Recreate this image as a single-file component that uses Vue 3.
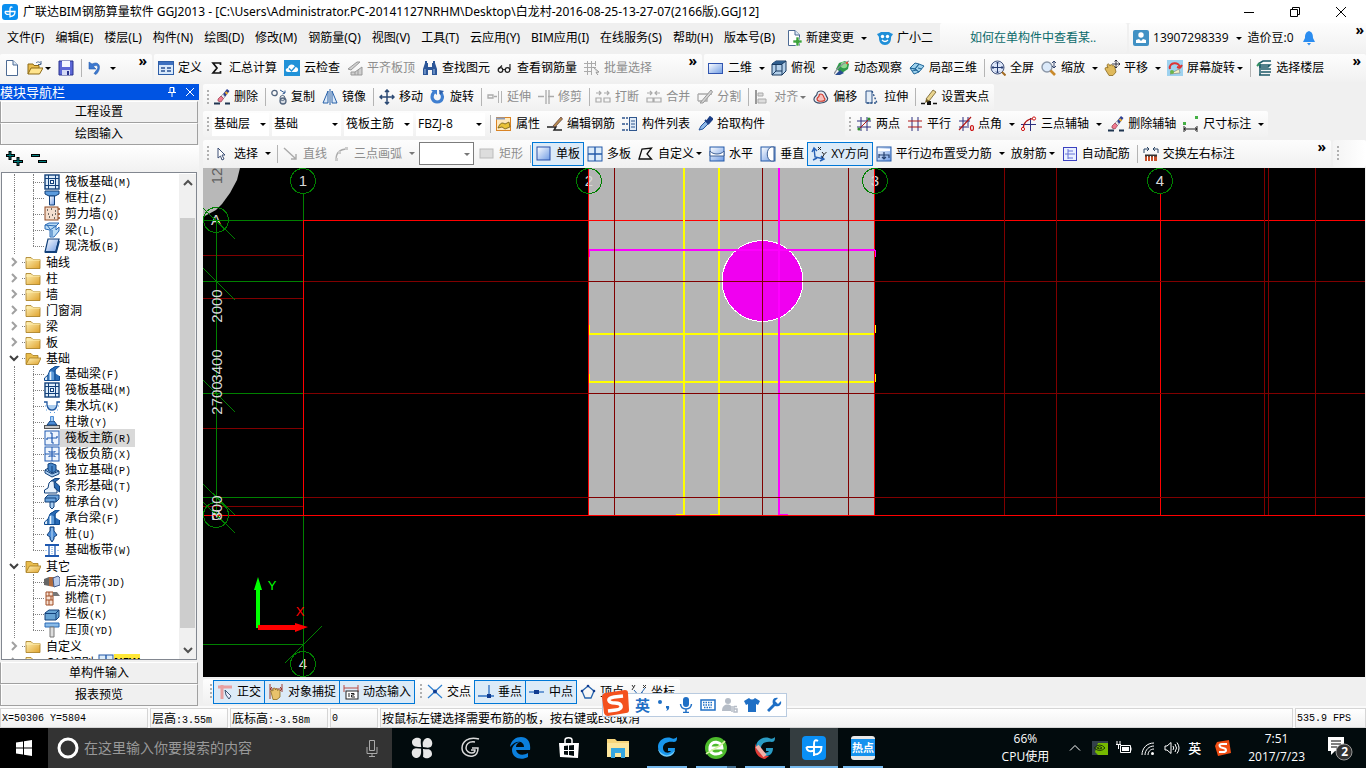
<script setup>
import { ref } from 'vue'

const page = '<path d="M2.500.5H9L13.500 5V15.500H2.500Z" fill="#fff" stroke="#4d6b94"/><path d="M9 .5V5H13.500" fill="#dce8f6" stroke="#4d6b94"/>'
const eraser = '<path d="M0 14.500H6M11 14.500H16" stroke="#1f3550" stroke-width="2"/><path d="M9 5 13 0 15.500 2 11 8Z" fill="#2b3f94"/><path d="M11.500 3 13.500 5" stroke="#f0b030" stroke-width="2"/><path d="M7 7 9 5 11 8 9 10Z" fill="#e5e5ef" stroke="#777" stroke-width=".5"/><path d="M7 7 9.500 9.500 7 13 4 12 4 10Z" fill="#f07a90" stroke="#93384c" stroke-width=".7"/>'
const pen = (a, b) => `<path d="M5 10 12 1 15 3 8 12Z" fill="${a}" stroke="${b}" stroke-width=".8"/><path d="M5 10 4 14 8 12Z" fill="${b}"/>`
const hash = '<path d="M1 5H15M1 11H15M5 1V15M11 1V15" stroke="#2c2f7e" fill="none"/>'
const folder = '<path d="M1 3.500H6L8 5.500H15V14.500H1Z" fill="url(#gold)" stroke="#a47a1c" stroke-width=".8"/><path d="M1 6H15" stroke="#fff1b4"/>'
const sq = '<rect x="1" y="1" width="14" height="14" fill="url(#sky)" stroke="#2259a8"/>'
const hand = '<path d="M3 8C2 6 4 6 5 7V5C6 3 7 4 7.500 6 8 4 9.500 4.500 9.500 6.500 11 5 12 6 12 8L12 13 9 15.500H5Z" fill="#e8c26b" stroke="#8a6a20" stroke-width=".8"/>'
const beam = '<path d="M0.500 14.500V12L4 9V14.500Z" fill="#d7e8f8" stroke="#0d4a91"/><path d="M4 9 6 4 11 1V14.500H4Z" fill="#5d9ad8" stroke="#0d4a91"/><path d="M6 4 12 0H15.500L11 4V14.500H15.500V10" fill="#2a6bb5" stroke="#0d4a91"/><path d="M6.500 6V14" stroke="#e8f3fd" stroke-width="1.500"/>'
const swirl = (a, b) => `<path d="M16 2C9 0 3 5 3 11C3 17 8 20 13 20C18 20 20 16 20 12H13V15H16C14 18 8 17 8 12C8 7 13 5 19 6C22 6 22 3 22 1C20 3 18 3 16 2Z" fill="${a}"/>${b || ''}`

const icons = {
  app: '<rect width="16" height="16" rx="3" fill="#0a8ff0"/><path d="M10.500 3.500C9 2.500 8 3 8 5V13.500M3 7.500H13C13 11 11 12.500 8 12.500M3 7.500C3 10 5 11 8 10" fill="none" stroke="#fff" stroke-width="1.300"/>',
  page, eraser, folder,
  openFile: '<path d="M1 14V4H6L7 5.500H12V8" fill="#e9bd4e" stroke="#8d6a16"/><path d="M1 14 4 8H16L12.500 14Z" fill="#ffe48d" stroke="#8d6a16"/><path d="M9 3C11 1 13 2 14 4M14 1V4.500H11" fill="none" stroke="#4d6b94"/>',
  openFolder: '<path d="M1 14V3.500H6L8 5.500H13V8" fill="#e9bd4e" stroke="#a47a1c" stroke-width=".8"/><path d="M1 14.500 4.500 8H16L13 14.500Z" fill="url(#gold)" stroke="#a47a1c" stroke-width=".8"/>',
  save: '<path d="M1 1H15V15H1Z" fill="#5c67d6" stroke="#2a348e"/><rect x="4" y="1" width="8" height="6" fill="#f4f6ff"/><rect x="4" y="10" width="8" height="5" fill="#d5daf5"/><rect x="9" y="11" width="2" height="4" fill="#2a348e"/>',
  undo: '<path d="M2 2V9H9L6.500 6.500C10 4 12 7 10 9.500L7 13.500 9 14.500C15 9 13 0 5 4Z" fill="#3c78cf" stroke="#285fae" stroke-width=".6"/>',
  define: '<rect x=".5" y="1.500" width="15" height="13" fill="#d8e8fa" stroke="#2d5ea8"/><rect x="1" y="2" width="14" height="3" fill="#3d70c0"/><path d="M3 8H7M3 11H7M9 8H13M9 11H13" stroke="#274f93" stroke-width="1.500"/>',
  sigma: '<path d="M11.500 5V3H4L8 8 4 13H11.500V11" fill="none" stroke="#111" stroke-width="1.700"/>',
  cloud: '<rect width="16" height="16" fill="#2192d8"/><path d="M4 12C1 12 1 8 4 8C4 4 10 3 11 7C15 7 15 12 12 12Z" fill="#fff"/><path d="M5 8.500 7.500 11 11 7" fill="none" stroke="#2192d8" stroke-width="1.400"/>',
  flush: '<path d="M1 9 10 2 13 2 4 10ZM4 12V15H15V7L8 12Z" fill="#d0d0d0" stroke="#999"/><path d="M8 12V15M11 10V15" stroke="#999"/>',
  find: '<path d="M3 3H6V7H10V3H13L15 9V15H10V10H6V15H1V9Z" fill="#2c5698"/><path d="M4 1V5M12 1V5" stroke="#2c5698" stroke-width="2"/><path d="M3 9V14M12 9V14" stroke="#9ec0ea"/>',
  glasses: '<circle cx="3.500" cy="10" r="2.300" fill="none" stroke="#222" stroke-width="1.300"/><circle cx="10.500" cy="10" r="2.300" fill="none" stroke="#222" stroke-width="1.300"/><path d="M6 9.500H8M1.500 9 5 5.500M13 10V4" stroke="#222" fill="none" stroke-width="1.200"/>',
  batch: '<path d="M0 3.500H12M0 7.500H12M0 11.500H8M3.500 1V15M7.500 1V15M11.500 1V6" stroke="#aaa" fill="none"/><path d="M9 7 15 12 12 12.500 14 15" fill="#ddd" stroke="#999"/>',
  plane: '<rect x=".5" y="3.500" width="14" height="10" fill="url(#sky)" stroke="#3155b0"/>',
  cube: '<path d="M1 4 5 1H15V11L11 15H1Z" fill="#b4d0ea" stroke="#17395f"/><path d="M1 4 5 1H15L11 4Z" fill="#2f5d8c"/><path d="M1 4.500H11V15M11 4 15 1M5 5V11M5 11 1 15M5 11H11" fill="none" stroke="#17395f"/>',
  orbit: '<path d="M5 11 2 9 5 3 11 1 15 4 14 9 8 13Z" fill="#2f9a4a"/><circle cx="10" cy="5" r="3.200" fill="#8ed98e"/><path d="M0 14C2 9 9 3 15 1" stroke="#8a8f99" stroke-width="1.300" fill="none"/><path d="M1 15 6 10 10 13 6 15Z" fill="#2a4d92"/><circle cx="13" cy="3" r="1.200" fill="#d53"/>',
  local3d: '<path d="M1 8 6 3 10 4 6 9ZM6 9 10 4 15 6 10 12ZM1 8 6 9 10 12 5 14Z" fill="#9ed1ec" stroke="#23689a"/><path d="M3 11 8 10M9 8 13 9" stroke="#23689a"/>',
  full: '<circle cx="7.500" cy="7.500" r="6.500" fill="#dde6f8" stroke="#43547c"/><path d="M7.500 2V13M2 7.500H13M6 3.500 7.500 2 9 3.500M6 11.500 7.500 13 9 11.500M3.500 6 2 7.500 3.500 9M11.500 6 13 7.500 11.500 9" fill="none" stroke="#273c70"/><path d="M12 12 15.500 15.500" stroke="#a36c23" stroke-width="2"/>',
  zoom: '<circle cx="6" cy="7" r="5" fill="#dceafa" stroke="#8b97a8" stroke-width="1.400"/><path d="M9.500 10.500 14 15" stroke="#c98a2b" stroke-width="2.600"/><path d="M13 1V8M11 3 13 1 15 3M11 6 13 8 15 6" stroke="#34466e" fill="none"/>',
  pan: '<path d="M1 9C1 7 3 7 4 8L3 5C4 3 5.500 4 6 6 6.500 4 8 4 8.500 6 10 5 11 6 11 8L12 12 9 15.500H5Z" fill="#dfb95c" stroke="#8a6a20" stroke-width=".8"/><path d="M12 0V8M8 4H16M10.500 1.500 12 0 13.500 1.500M10.500 6.500 12 8 13.500 6.500M14.500 2.500 16 4 14.500 5.500" stroke="#223" fill="none" stroke-width=".9"/>',
  rotateScr: '<rect width="16" height="16" fill="#9ed2ef"/><path d="M3 9C1 2 13 1 13 8M13 8 10 7M13 8 15 5" fill="none" stroke="#d33" stroke-width="2"/><path d="M3 14 12 9 13 13Z" fill="#f5f1c4" stroke="#777" stroke-width=".6"/><circle cx="5" cy="12" r="2" fill="#6bb54a"/>',
  floors: '<path d="M2 4 7 1H15M4 4V15M3 5H14L12 7H3M5 9H15M5 12H15M3 15H14" fill="none" stroke="#1c5a68" stroke-width="1.500"/><path d="M1 6 4 3" stroke="#329060" stroke-width="2"/>',
  copy: '<circle cx="3.500" cy="4" r="2.700" fill="none" stroke="#53657e" stroke-width="1.300"/><circle cx="12" cy="12" r="3" fill="#d8dde4" stroke="#53657e" stroke-width="1.300"/><circle cx="11.500" cy="9" r="2.500" fill="none" stroke="#53657e"/><path d="M9 1 14 4M14 4V1.500M14 4 11.500 5" stroke="#345c94"/>',
  mirror: '<path d="M6 2V14H1ZM10 2V14H15Z" fill="#dce9f8" stroke="#2760a8"/><path d="M8 0V16" stroke="#2760a8"/>',
  move: '<path d="M8 1V15M1 8H15M6 3 8 1 10 3M6 13 8 15 10 13M3 6 1 8 3 10M13 6 15 8 13 10" fill="none" stroke="#2c4a74" stroke-width="1.500"/>',
  rotate: '<path d="M4 3C0 8 3 13 7 13C13 13 14 6 10 3" fill="none" stroke="#3f7fd0" stroke-width="3.200"/><path d="M1 1H7V6Z" fill="#3f7fd0"/><path d="M9 1 14 2 10 6Z" fill="#2c5fa8"/>',
  extend: '<path d="M1 6H6V9H1ZM7 7.500H10" fill="none" stroke="#aaa" stroke-width="1.300"/><path d="M11.500 2V14M14.500 2V14" stroke="#b5b5b5"/>',
  trim: '<path d="M0 7.500H6M10 7.500H16M8 1V15M11 1V15" stroke="#aaa" fill="none" stroke-width="1.300"/>',
  brk: '<path d="M1 9H6V13H1ZM9 9H15V13H9ZM1 4H6M4 2 6 4 4 6M9 4H14M12 2 14 4 12 6" fill="none" stroke="#aaa" stroke-width="1.200"/>',
  merge: '<path d="M1 9H7V13H1ZM8 9H15V13H8ZM1 4H6M4 2 6 4 4 6M9 4H14M11 2 9 4 11 6" fill="none" stroke="#aaa" stroke-width="1.200"/>',
  split: '<path d="M1 5H15M1 12H10V7M1 12V5" fill="none" stroke="#aaa" stroke-width="1.300"/><path d="M3 14 14 1 15.500 3 6 14Z" fill="#d4d4d4" stroke="#999"/>',
  align: '<path d="M2 1V15" stroke="#999" stroke-width="2"/><path d="M4 4H9V7H4ZM4 10H12V14H4Z" fill="#ddd" stroke="#aaa"/>',
  offset: '<path d="M8 2C13 2 12 6 14.500 9C16 15 0 16 1 10C1 7 4 7 4 5C4 3 6 2 8 2Z" fill="#e8edf3" stroke="#3b4d68" stroke-width="1.200"/><path d="M8 5C11 5 10 8 12 10C12 13 4 13 4 10C4 8 6 8 6 7C6 5 7 5 8 5Z" fill="#f6c0bb" stroke="#d0392c" stroke-width="1.200"/>',
  stretch: '<path d="M2 14V2H8V14Z" fill="#e4edf7" stroke="#2e5589"/><path d="M8 2 13 14H2" stroke="#2e5589" stroke-width="1.400" stroke-dasharray="2 1.500" fill="none"/>',
  grip: '<path d="M0 14.500H4M12 14.500H16" stroke="#111" stroke-width="1.500"/><rect x="6" y="12" width="4" height="4" fill="#111"/>' + pen('#e9d48e', '#6e5a24'),
  props: '<rect x=".5" y="1.500" width="14" height="13" fill="#ffe9bd" stroke="#d98324"/><path d="M0 2.500H9" stroke="#8a9ab8" stroke-width="2"/><path d="M2 12C4 7 6 6 9 8L13 6 14 11 9 13 6 11Z" fill="#e8c238" stroke="#6d5612" stroke-width=".8"/>',
  editbar: '<path d="M0 11H9L7 14H15" fill="none" stroke="#222" stroke-width="1.400"/><path d="M6 10 14 1 15.500 3 8 11Z" fill="#b98d4f" stroke="#533" stroke-width=".7"/>',
  list: '<path d="M0 2H3M0 8H3M0 14H3M4 2H6M4 8H6M4 14H6" stroke="#2f568e" stroke-width="1.600"/><rect x="7.500" y="1.500" width="7" height="13" fill="#e1ebf7" stroke="#2f568e"/><path d="M9 5H13M9 8H13M9 11H13" stroke="#2f568e"/>',
  pick: '<path d="M2 14 4 10 9 5 12 7 6 13Z" fill="#8fb9e8" stroke="#27569c"/><path d="M8 4 12 8M10 5 13 1 15.500 3 12 7Z" fill="#1c3f86" stroke="#1c3f86" stroke-width="1.800"/>',
  twoPt: hash + '<path d="M2 14 14 2" stroke="#b01818"/><circle cx="3" cy="13" r="1.600" fill="#2e8b2e"/><circle cx="13" cy="3" r="1.600" fill="#2e8b2e"/>',
  para: '<path d="M5 1V15M11 1V15" stroke="#2c2f7e"/><path d="M1 5H15M1 11H15" stroke="#b01818" stroke-width="1.200"/>',
  angle: '<path d="M1 5H12M1 11H9M5 1V15M10 1V12" stroke="#2c2f7e"/><path d="M1 14 13 1" stroke="#b01818" stroke-width="1.200"/><ellipse cx="14" cy="12" rx="1.500" ry="2.500" fill="none" stroke="#c11" stroke-width="1.200"/>',
  threeAx: '<path d="M0 8.500H15M9.500 2V15" stroke="#2c2f7e"/><path d="M2 14C2 7 6 3 13 2.500" stroke="#b01818" fill="none" stroke-width="1.200"/><circle cx="2" cy="13" r="1.600" fill="#fff" stroke="#c11"/><circle cx="13" cy="2.500" r="1.600" fill="#fff" stroke="#c11"/>',
  dim: '<path d="M1 10V16M14 10V16M1 13H14M3 11.500 1 13 3 14.500M12 11.500 14 13 12 14.500" stroke="#222" fill="none"/><rect x="0" y="6" width="3" height="3" fill="#44b044"/><rect x="12" y="0" width="3" height="3" fill="#44b044"/>',
  cursor: '<path d="M4 2 11 9H8L10 13 8 14 6.500 10 4 12Z" fill="#fff" stroke="#3d4f74"/>',
  line: '<path d="M1 2 13 13M13 8V13H8" stroke="#aaa" fill="none" stroke-width="1.400"/>',
  arc: '<path d="M2 14C2 7 6 3 13 3" stroke="#aaa" fill="none" stroke-width="1.300"/><path d="M1 12H4V15H1ZM4 5H7V8H4ZM11 1H14V4H11Z" fill="#ccc"/>',
  rect: '<rect x="1" y="3" width="13" height="9" fill="#ddd" stroke="#bbb"/>',
  single: '<rect x="1" y="1" width="13" height="13" fill="url(#sky)" stroke="#2850a8"/>',
  multi: '<rect x="1" y="1" width="14" height="14" fill="#dcecfa" stroke="#2259a8"/><path d="M8 1V15M1 8H15" stroke="#2259a8" stroke-width="1.400"/>',
  custom: '<path d="M1 13 4 3 13.500 2 9 8 13.500 13Z" fill="none" stroke="#111" stroke-width="1.300"/>',
  horiz: sq + '<path d="M1 5C4 9 12 9 15 5V10H1Z" fill="#fff" stroke="#3c5f95"/>',
  vert: sq + '<path d="M11 1C6 3 6 13 11 15H14V1Z" fill="#fff" stroke="#3c5f95"/>',
  xy: '<path d="M3 2 4 11 13 13M1 6 3 2 6 5M10 10 13 13 9 15M6 12 2 14" stroke="#2560b5" fill="none" stroke-width="1.400"/><path d="M7 1 10 4M10 1 7 4M11 6 13 8.500 15.500 6M13 8.500 11 12" stroke="#222" fill="none"/>',
  forcebar: sq + '<path d="M2 4H14" stroke="#fff" stroke-width="2"/><path d="M3 8V12M3 9H13V12M8 6V13M6 11 8 13 10 11" fill="none" stroke="#25406f" stroke-width="1.200"/>',
  autobar: '<rect x="1.500" y="1.500" width="13" height="13" fill="#e9f0ff" stroke="#3b41c0"/><path d="M6 3V13M6 5H11M3 8H13M6 12H11" stroke="#6675d8" fill="none"/>',
  swap: '<path d="M1 7V3H6M4 1 6 3 4 5M15 7V3H10M12 1 10 3 12 5" fill="none" stroke="#2b4564"/><path d="M2 9H14V15H2Z" fill="#c7502a"/><path d="M2 9.500H14" stroke="#333" stroke-width="2"/><path d="M4.500 10V15M7.500 10V15M10.500 10V15" stroke="#fff"/>',
  ortho: '<path d="M1 3H15M5 1V15" stroke="#e8a0a0" stroke-width="3"/><path d="M8 6 14 12 12 15 9 11Z" fill="#eef" stroke="#3b5470"/>',
  osnap: '<path d="M2 0V15M14 0V8M2 5H14M4 3 2 5 4 7M12 3 14 5 12 7" fill="none" stroke="#9c3a30"/>' + hand,
  dyn: '<path d="M1 1V8M15 1V8M1 4H15" stroke="#b84a44"/><rect x="3" y="7" width="12" height="8" fill="#fff" stroke="#222"/><path d="M6 9V13M8 9.500H11V11H8.500V13H12" fill="none" stroke="#222"/>',
  cross: '<path d="M1 1 15 14M15 1 1 14" stroke="#2d7fd0" stroke-width="1.200"/><circle cx="8" cy="7.500" r="2" fill="#113c90"/>',
  perp: '<path d="M11 1V12M0 12H16" stroke="#2d6fc0" stroke-width="1.300"/><rect x="9" y="10" width="4" height="4" fill="#113c90"/>',
  mid: '<path d="M0 8H15" stroke="#2d6fc0" stroke-width="1.300"/><rect x="5" y="6" width="5" height="4" fill="#113c90"/>',
  vertex: '<path d="M8 2 14 7 11 14H5L2 7Z" fill="none" stroke="#2664ad" stroke-width="1.300"/><circle cx="8" cy="2" r="1.300" fill="#113c90"/><circle cx="14" cy="7" r="1.300" fill="#113c90"/><circle cx="2" cy="7" r="1.300" fill="#113c90"/>',
  coord: '<path d="M3 6 8 12 14 4M5 9V15M11 8V13" fill="none" stroke="#2664ad"/><path d="M1 1 3 4M4 1 1 6M12 1 15 4M15 1 12 4" stroke="#333"/>',
  newchg: page + '<path d="M10 7H13V10H16V13H13V16H10V13H7V10H10Z" fill="#3da33c" stroke="#fff" stroke-width=".6"/>',
  owl: '<path d="M0 4C2 3 3 3 4 2H12C13 3 14 3 16 4 15 6 14 6 14 8 14 12 12 15 8 15S2 12 2 8C2 6 1 6 0 4Z" fill="#1f8fd8"/><circle cx="5.500" cy="6.500" r="1.700" fill="#fff"/><circle cx="10.500" cy="6.500" r="1.700" fill="#fff"/><path d="M5 10Q8 13 11 10" stroke="#fff" fill="none" stroke-width="1.300"/>',
  user: '<rect width="16" height="16" rx="2" fill="#4191c4"/><circle cx="8" cy="5" r="2.700" fill="#fff"/><path d="M3 13V10L6 9 8 11 10 9 13 10V13Z" fill="#fff"/>',
  bell: '<path d="M8 1C11 2 12 4 12 8L14 12H2L4 8C4 4 5 2 8 1Z" fill="#2b8df0"/><path d="M6 13H10L8 15.500Z" fill="#2b8df0"/>',
  raft: '<rect x="1" y="1" width="14" height="14" fill="#dcecfa" stroke="#12407a" stroke-width="1.400"/><path d="M1 4.500H15M1 11.500H15M4.500 1V15M11.500 1V15" stroke="#12407a"/><rect x="6.500" y="6.500" width="3" height="3" fill="#fff" stroke="#12407a"/>',
  column: '<path d="M1 1H15V4L11 6H5L1 4Z" fill="#5b9bdd" stroke="#12407a"/><path d="M5.500 6H10.500V15H5.500Z" fill="url(#sky)" stroke="#12407a"/>',
  wall: '<rect x="1" y="1" width="13" height="13" fill="#f4dfcf" stroke="#8e4a24"/><path d="M3 4H4M7 3H8M11 5H12M4 8H5M8 9H9M5 11H6M10 12H11M11 8H12" stroke="#444" stroke-width="1.300"/><path d="M14 3H16M14 8H16M14 12H16" stroke="#8e4a24" stroke-width="1.400"/>',
  girder: '<path d="M1 3 5 1H15L12 4V8L15 5V9L10 15H6V8L1 7Z" fill="#bbdcf5" stroke="#2a6bb5"/><path d="M1 3 12 4M6 8 12 4M8 14V8M3 3 6 7" stroke="#2a6bb5"/>',
  slab: '<path d="M4 1H15L12 14H1Z" fill="url(#sky)" stroke="#12407a" stroke-width="1.200"/><path d="M1 14H12L15 3" fill="none" stroke="#12407a" stroke-width="2"/>',
  beam,
  pit: '<path d="M0 4H3V7Q4 12 8 12T13 7V4H16" fill="none" stroke="#2058a0" stroke-width="1.300"/><path d="M4 8H12M5 10H11M1 8H2M14 8H15M2 12H3M6 14.500H7M10 14.500H11M13 12H14" stroke="#5b9bdd"/>',
  pier: '<rect x=".5" y="11.500" width="15" height="3" fill="#c8c8c8" stroke="#555"/><path d="M3 11 6 7H10L13 11Z" fill="#4c8cd6" stroke="#12407a"/><path d="M6.500 7V2.500H9.500V7" fill="#a9cdf0" stroke="#4c8cd6"/>',
  rmain: '<rect x="1" y="1" width="14" height="14" fill="#edf4fd" stroke="#1e58b0"/><path d="M8 3V13M3 8H13M3 8V10M13 8V6M8 3H6M8 13H10" stroke="#1e58b0" fill="none" stroke-width="1.200"/>',
  rneg: '<rect x="1" y="1" width="14" height="14" fill="#edf4fd" stroke="#1e58b0"/><path d="M8 1V15M1 8H15" stroke="#1e58b0"/><path d="M5 5V6H11V5M5 11V10H11V11" stroke="#1e58b0" fill="none"/>',
  indep: '<path d="M1 8 6 5 15 9V12L8 15 1 11Z" fill="#a9cdf0" stroke="#12407a"/><path d="M4 2 7 1 12 3V9L8 11 4 8Z" fill="#4484c8" stroke="#12407a"/><path d="M1 8 8 12 15 9M8 4V11" stroke="#12407a" fill="none"/>',
  strip: '<path d="M7 3 11 .5H15.500L11 4 15.500 8V14L12 11Z" fill="#2a6bb5" stroke="#12407a"/><path d="M.5 15V12L4 10 5 5 7 3H10L10.500 10 13 12V15Z" fill="#e8f2fc" stroke="#12407a"/>',
  cap: '<path d="M1 4 4 1H15V5L12 8H1Z" fill="#6ba3dc" stroke="#12407a"/><path d="M1 4H12V8" fill="none" stroke="#12407a"/><path d="M6 8H10V13L8 15 6 13Z" fill="#a9cdf0" stroke="#12407a"/>',
  pile: '<path d="M6 5V1H10V5L13 9 10 11V13L8 16 6 13V11L3 9Z" fill="#4c8cd6" stroke="#12407a"/><path d="M8 2V14" stroke="#bcdcf8"/>',
  band: '<path d="M1 3H15M1 14H15" stroke="#1e58b0" stroke-width="2"/><path d="M5 3V14M11 3V14" stroke="#1e58b0" stroke-width="1.300"/><path d="M8 5V12M2 8V9M14 8V9" stroke="#5b9bdd" stroke-dasharray="1 1"/>',
  post: '<path d="M0 5 5 3V12L0 11Z" fill="#666"/><path d="M5 3H10V13L5 12Z" fill="#b06a3c"/><path d="M9 4 14 2 16 4V11L10 13Z" fill="#b9ccec" stroke="#40598a"/>',
  eave: '<path d="M2 2H9V15H2Z" fill="#f7e2d4" stroke="#a04c24"/><path d="M2 6H9M2 10H9M5 2V6M7 6V10M5 10V15" stroke="#a04c24"/><path d="M9 2H13L16 6H9Z" fill="#777"/>',
  rail: '<path d="M1 7 5 4H15V11L12 14H1Z" fill="#68a4d4" stroke="#12407a"/><path d="M1 7.500H12V14M12 7 15 4" stroke="#12407a" fill="none"/>',
  coping: '<path d="M1 1H15V5H1Z" fill="#8abbe8" stroke="#2a6bb5"/><path d="M6 5H10V15H6Z" fill="#ddd" stroke="#777"/>',
}

const I = (i, t, o = {}) => ({ k: 'item', i, t, ...o })
const S = { k: 'sep' }
const G = { k: 'grip' }
const off = { off: true }
const M = t => ({ k: 'item', t })

const rows = [
  { id: 'menu', groups: [
    { c: 'menus', items: ['文件(F)', '编辑(E)', '楼层(L)', '构件(N)', '绘图(D)', '修改(M)', '钢筋量(Q)', '视图(V)', '工具(T)', '云应用(Y)', 'BIM应用(I)', '在线服务(S)', '帮助(H)', '版本号(B)'].map(M).concat([I('newchg', '新建变更', { a: 1 }), I('owl', '广小二')]) },
    { c: 'tip', items: [{ k: 'link', t: '如何在单构件中查看某..' }] },
    { c: 'grow account', items: [I('user', '13907298339', { a: 1 }), M('造价豆:0'), I('bell', ''), { k: 'more' }] },
  ] },
  { id: 'main', groups: [
    { c: 'files', items: [I('page', ''), I('openFile', '', { a: 2 }), I('save', ''), S, I('undo', '', { a: 1 }), { k: 'more' }] },
    { c: 'calc', items: [I('define', '定义'), I('sigma', '汇总计算'), I('cloud', '云检查'), I('flush', '平齐板顶', off), I('find', '查找图元'), I('glasses', '查看钢筋量'), I('batch', '批量选择', off), { k: 'more' }] },
    { c: 'grow', items: [I('plane', '二维', { a: 1 }), I('cube', '俯视', { a: 1 }), I('orbit', '动态观察'), I('local3d', '局部三维'), S, I('full', '全屏'), I('zoom', '缩放', { a: 1 }), I('pan', '平移', { a: 1 }), I('rotateScr', '屏幕旋转', { a: 2 }), S, I('floors', '选择楼层'), { k: 'more' }] },
  ] },
  { id: 'edit', groups: [
    { items: [G, I('eraser', '删除'), S, I('copy', '复制'), I('mirror', '镜像'), S, I('move', '移动'), I('rotate', '旋转'), S, I('extend', '延伸', off), I('trim', '修剪', off), S, I('brk', '打断', off), I('merge', '合并', off), I('split', '分割', off), S, I('align', '对齐', { off: true, a: 2 }), I('offset', '偏移'), I('stretch', '拉伸'), S, I('grip', '设置夹点')] },
  ] },
  { id: 'comp', groups: [
    { items: [G, { k: 'combo', t: '基础层', n: '楼层', c: 'short' }, { k: 'combo', t: '基础', n: '分类' }, { k: 'combo', t: '筏板主筋', n: '构件类型' }, { k: 'combo', t: 'FBZJ-8', n: '构件' }, S, I('props', '属性'), I('editbar', '编辑钢筋'), I('list', '构件列表'), I('pick', '拾取构件')] },
    { c: 'axis', items: [G, I('twoPt', '两点'), I('para', '平行'), I('angle', '点角', { a: 1 }), I('threeAx', '三点辅轴', { a: 1 }), I('eraser', '删除辅轴'), I('dim', '尺寸标注', { a: 1 })] },
  ] },
  { id: 'draw', groups: [
    { c: 'grow', items: [G, I('cursor', '选择', { a: 1 }), S, I('line', '直线', off), I('arc', '三点画弧', { off: true, a: 1 }), { k: 'combo', t: '', n: '画弧参数', c: 'boxed' }, I('rect', '矩形', off), S, I('single', '单板', { on: true }), I('multi', '多板'), I('custom', '自定义', { a: 2 }), I('horiz', '水平'), I('vert', '垂直'), I('xy', 'XY方向', { on: true }), I('forcebar', '平行边布置受力筋', { a: 1 }), { k: 'item', t: '放射筋', a: 2 }, I('autobar', '自动配筋'), S, I('swap', '交换左右标注'), { k: 'more' }] },
    { c: 'stub', items: [G] },
  ] },
  { id: 'snap', groups: [
    { c: 'wide', items: [G, I('ortho', '正交', { on: true }), I('osnap', '对象捕捉', { on: true }), I('dyn', '动态输入', { on: true })] },
    { items: [G, I('cross', '交点'), I('perp', '垂点', { on: true }), I('mid', '中点', { on: true }), I('vertex', '顶点'), I('coord', '坐标')] },
  ] },
]

const N = (i, t, k, last) => ({ kid: true, i, t, k, last })
const F = (t, open) => ({ t, open, i: open ? 'openFolder' : 'folder' })
const tree = [
  N('raft', '筏板基础', 'M'), N('column', '框柱', 'Z'), N('wall', '剪力墙', 'Q'), N('girder', '梁', 'L'), N('slab', '现浇板', 'B', true),
  F('轴线'), F('柱'), F('墙'), F('门窗洞'), F('梁'), F('板'), F('基础', true),
  N('beam', '基础梁', 'F'), N('raft', '筏板基础', 'M'), N('pit', '集水坑', 'K'), N('pier', '柱墩', 'Y'), N('rmain', '筏板主筋', 'R'), N('rneg', '筏板负筋', 'X'),
  N('indep', '独立基础', 'P'), N('strip', '条形基础', 'T'), N('cap', '桩承台', 'V'), N('beam', '承台梁', 'F'), N('pile', '桩', 'U'), N('band', '基础板带', 'W', true),
  F('其它', true), N('post', '后浇带', 'JD'), N('eave', '挑檐', 'T'), N('rail', '栏板', 'K'), N('coping', '压顶', 'YD', true),
  F('自定义'), { t: 'CAD识别', i: 'folder', badge: true },
]
const selected = ref(16)

const darkRows = [281, 393, 497]
const stubRows = [255, 298, 428, 506]
const greenRows = [220, 281, 393, 497, 644]
const darkCols = [614, 762, 848, 1004, 1056, 1264, 1268, 1315]
const ticks = [[208, 239], [268, 300], [380, 412], [484, 515], [502, 533]]
const bubbles = [[303, 181, '1'], [589, 181, '2'], [875, 181, '3'], [1160, 181, '4'], [216, 220, 'A'], [216, 515, 'B'], [303, 664, '4']]
const dims = [[306, '2000'], [366, '3400'], [398, '2700'], [508, '300']]

const apps = [
  { n: '风扇', s: '<g fill="#e8e8e8"><path d="M12 11C4 12 2 9 2 6S6 1 9 2 13 6 12 11Z"/><path d="M13 11C12 4 15 2 18 2S23 6 22 9 18 13 13 11Z"/><path d="M13 12C20 12 22 15 22 18S18 23 15 22 11 18 13 12Z"/><path d="M11 12C12 20 9 22 6 22S1 18 2 15 6 11 11 12Z"/></g><path d="M12 2C10 8 14 14 12 22M2 12C8 10 16 14 22 12" fill="none" stroke="#020b0d" stroke-width="1.500"/>' },
  { n: '浏览助手', s: '<path d="M20 3C9 0 3 6 3 12S9 21 14 20 19 14 19 12H13M16 6C9 5 7 9 7 12S10 17 13 17 16 15 16 14H12" fill="none" stroke="#dadada" stroke-width="1.500"/>' },
  { n: 'Edge', s: '<path d="M2 11C3 4 8 1 13 1C20 1 23 7 22 14H8C9 19 15 20 20 17V21C13 25 4 22 4 14C4 10 8 6 12 6C9 7 8 9 8 11H16C16 5 8 3 2 11Z" fill="#0b7fdc"/>' },
  { n: '应用商店', s: '<path d="M2 7H22L21 22 3 21Z" fill="#fff"/><path d="M8 8V4C8 1 15 1 15 4V8" fill="none" stroke="#fff" stroke-width="1.500"/><path d="M7 10 11 9.500V14H7ZM12 9.500 17 9V14H12ZM7 15H11V19L7 18.500ZM12 15H17V20L12 19Z" fill="#020b0d"/>' },
  { n: '文件资源管理器', s: '<path d="M1 3H9L11 5H23V21H1Z" fill="#f7d57b"/><path d="M1 7H23V21H1Z" fill="#fde69d"/><path d="M5 22V12H19V22H15V17H9V22Z" fill="#36a6e0"/>' },
  { n: '广联达', run: true, s: swirl('#1896ec', '<path d="M3 13C8 21 15 21 20 14 18 23 5 23 3 13Z" fill="#71cbf8"/>') },
  { n: '360浏览器', run: true, multi: true, s: '<circle cx="12" cy="12" r="11" fill="#4dbb2c"/><path d="M5 12H18C18 5 7 4 6 11S12 20 18 16" fill="none" stroke="#fff" stroke-width="3"/><path d="M2 18C7 14 18 10 21 5" fill="none" stroke="#d6f5a4" stroke-width="1.500"/>' },
  { n: '广联达服务', run: true, s: swirl('#2a9cc4', '<path d="M3 7C2 14 9 21 16 20L12 23C4 22 0 14 3 7Z" fill="#e33c36"/><path d="M4 10 12 20" stroke="#f2b2a8" stroke-width="4"/>') },
  { n: '广联达钢筋算量', run: true, active: true, s: '<rect width="24" height="24" rx="4" fill="#0a8ff5"/><path d="M16 5C13 3 12 5 12 8V20M4.500 11H19.500C19.500 16 17 18.500 12 18.500M4.500 11C4.500 15 8 16 12 14.500" fill="none" stroke="#fff" stroke-width="1.900"/>' },
]
</script>

<template>
  <div class="app">
    <svg class="defs" width="0" height="0" aria-hidden="true">
      <defs>
        <linearGradient id="sky" x1="0" y1="0" x2="1" y2="1"><stop offset="0" stop-color="#ffffff" /><stop offset="1" stop-color="#6e9be4" /></linearGradient>
        <linearGradient id="gold" x1="0" y1="0" x2="1" y2="1"><stop offset="0" stop-color="#fff3ba" /><stop offset="1" stop-color="#dfa22c" /></linearGradient>
      </defs>
    </svg>

    <header class="title">
      <svg class="ic" viewBox="0 0 16 16" v-html="icons.app"></svg>
      <h1>广联达BIM钢筋算量软件 GGJ2013 - [C:\Users\Administrator.PC-20141127NRHM\Desktop\白龙村-2016-08-25-13-27-07(2166版).GGJ12]</h1>
      <div class="winbtns">
        <button aria-label="最小化"><svg viewBox="0 0 12 12"><path d="M1 6.500H11" /></svg></button>
        <button aria-label="还原"><svg viewBox="0 0 12 12"><path d="M1.500 3.500H8.500V10.500H1.500ZM3.500 3.500V1.500H10.500V8.500H8.500" /></svg></button>
        <button aria-label="关闭"><svg viewBox="0 0 12 12"><path d="M1 1 11 11M11 1 1 11" /></svg></button>
      </div>
    </header>

    <div v-for="row in rows" :key="row.id" class="row" :class="row.id" role="toolbar">
      <div v-for="(g, gi) in row.groups" :key="gi" class="group" :class="g.c">
        <template v-for="(it, ii) in g.items" :key="ii">
          <i v-if="it.k === 'sep'" class="sep"></i>
          <i v-else-if="it.k === 'grip'" class="grip"></i>
          <button v-else-if="it.k === 'more'" class="more" aria-label="更多">»</button>
          <a v-else-if="it.k === 'link'" href="#">{{ it.t }}</a>
          <span v-else-if="it.k === 'combo'" class="combo" :class="it.c">
            <select :aria-label="it.n"><option>{{ it.t }}</option></select>
            <i class="arrow"></i>
          </span>
          <button v-else class="item" :class="{ on: it.on, off: it.off }" :disabled="it.off" :aria-label="it.t || it.i">
            <svg v-if="it.i" class="ic" viewBox="0 0 16 16" v-html="icons[it.i]"></svg>
            <span v-if="it.t">{{ it.t }}</span>
            <i v-if="it.a" class="arrow" :class="{ tight: it.a === 2 }"></i>
          </button>
        </template>
      </div>
    </div>

    <aside class="side">
      <div class="sidehead">
        <span>模块导航栏</span>
        <button aria-label="固定"><svg viewBox="0 0 10 10"><path d="M3 .5H7V5.500M3 .5V5.500M1 5.500H9M5 5.500V10M6.500 1V5" /></svg></button>
        <button aria-label="关闭面板"><svg viewBox="0 0 10 10"><path d="M1 1 9 9M9 1 1 9" /></svg></button>
      </div>
      <button class="tab">工程设置</button>
      <button class="tab">绘图输入</button>
      <div class="sidetools">
        <button aria-label="全部展开"><svg viewBox="0 0 18 16"><path d="M4 0V9M0 4.500H9M12 6V15M7 10.500H17" class="o" /><path d="M4 1V8M1 4.500H8M12 7V14M8 10.500H16" class="n" /></svg></button>
        <button aria-label="全部折叠"><svg viewBox="0 0 18 16"><path d="M1 4.500H10M8 10.500H17" class="o" /><path d="M2 4.500H9M9 10.500H16" class="n" /></svg></button>
      </div>
      <div class="treebox">
        <ul class="tree">
          <li v-for="(n, i) in tree" :key="i" :class="{ kid: n.kid, last: n.last, sel: i === selected }">
            <template v-if="n.kid"><i class="trunk"></i><i class="branch"></i></template>
            <template v-else>
              <svg class="chev" :class="{ open: n.open }" viewBox="0 0 10 10"><path d="M3 1 7 5 3 9" /></svg><i class="dash"></i>
            </template>
            <button @click="selected = i">
              <svg class="ic" viewBox="0 0 16 16" v-html="icons[n.i]"></svg>
              <span class="name">{{ n.t }}<small v-if="n.k">({{ n.k }})</small></span>
              <template v-if="n.badge"><svg class="ic" viewBox="0 0 16 16" v-html="icons.multi"></svg><b>NEW</b></template>
            </button>
          </li>
        </ul>
        <div class="scroll">
          <svg viewBox="0 0 10 10"><path d="M1 7 5 3 9 7" /></svg>
          <div class="track"><div class="thumb"></div></div>
          <svg viewBox="0 0 10 10"><path d="M1 3 5 7 9 3" /></svg>
        </div>
      </div>
      <button class="tab">单构件输入</button>
      <button class="tab">报表预览</button>
    </aside>

    <main class="canvas">
      <svg width="100%" height="100%">
        <g transform="translate(-203 -168)">
          <path d="M203 168H240L237 180 230 193 222 204 216 210 203 217Z" fill="#b8b8b8" />
          <rect x="589" y="168" width="286" height="347" fill="#b5b5b5" />
          <text v-for="(b, i) in bubbles" :key="'t' + i" :x="b[0]" :y="b[1] + 5" class="lab">{{ b[2] }}</text>
          <g class="px">
            <rect v-for="y in greenRows" :key="'g' + y" x="203" :y="y" width="100" height="1" class="gr" />
            <rect v-for="y in stubRows" :key="'s' + y" x="203" :y="y" width="100" height="1" class="dk" />
            <rect x="216" y="220" width="1" height="295" class="gr" />
            <rect x="303" y="194" width="1" height="483" class="gr" />
            <rect x="303" y="220" width="1" height="295" class="rd" />
            <rect x="303" y="220" width="100%" height="1" class="rd" />
            <rect x="683" y="168" width="2" height="347" class="ye" />
            <rect x="718" y="168" width="2" height="347" class="ye" />
            <rect x="589" y="333" width="286" height="2" class="ye" />
            <rect x="589" y="381" width="286" height="2" class="ye" />
            <path d="M676 514H684V515H676ZM710 514H719V515H710ZM589 325H590V333H589ZM875 325H876V333H875ZM589 374H590V382H589ZM875 374H876V382H875Z" class="ye" />
            <rect x="588" y="168" width="1" height="347" class="rd" />
            <rect x="874" y="168" width="1" height="347" class="rd" />
            <rect x="1160" y="194" width="1" height="321" class="rd" />
            <circle cx="762.500" cy="281" r="40.500" fill="#f000f0" stroke="#fff" />
            <rect x="778" y="168" width="2" height="347" class="mg" />
            <rect x="589" y="249" width="286" height="2" class="mg" />
            <path d="M779 514H788V515H779ZM589 250H590V257H589ZM875 250H876V257H875Z" class="mg" />
            <rect v-for="x in darkCols" :key="'c' + x" :x="x" y="168" width="1" height="347" class="dk" />
            <rect v-for="y in darkRows" :key="'d' + y" x="304" :y="y" width="100%" height="1" class="dk" />
            <rect x="203" y="515" width="100%" height="1" class="rd" />
            <path v-for="t in ticks" :key="t[0]" :d="`M203 ${t[0]}L235 ${t[1]}`" class="gl" />
            <path d="M285 663 322 626" class="gl" />
            <circle v-for="(b, i) in bubbles" :key="'b' + i" :cx="b[0]" :cy="b[1]" r="12.500" class="gl" />
          </g>
          <text v-for="d in dims" :key="d[1]" :transform="`translate(222 ${d[0]}) rotate(-90)`" class="lab">{{ d[1] }}</text>
          <text transform="translate(222 176) rotate(-90)" class="lab dim">12</text>
          <path d="M256 628V590H254L258 577 262 590H260V628Z" fill="#00ff00" />
          <path d="M258 625H295V623L308 627 295 632V630H258Z" fill="#ff0000" />
          <text x="272" y="590" class="ucs y">Y</text>
          <text x="300" y="616" class="ucs x">X</text>
        </g>
      </svg>
    </main>

    <footer class="status">
      <span class="c1">X=50306 Y=5804</span>
      <span class="c2"><em>层高</em>:3.55m</span>
      <span class="c3"><em>底标高</em>:-3.58m</span>
      <span class="c4">0</span>
      <span class="c5"><em>按鼠标左键选择需要布筋的板，按右键或</em>ESC<em>取消</em></span>
      <span class="c6">535.9 FPS</span>
    </footer>

    <nav class="task">
      <button class="start" aria-label="开始"><svg viewBox="0 0 16 16"><path d="M0 2.500 7 1.500V7.500H0ZM8 1.300 16 0V7.500H8ZM0 8.500H7V14.500L0 13.500ZM8 8.500H16V16L8 14.700Z" /></svg></button>
      <label class="search">
        <svg class="ring" viewBox="0 0 22 22"><circle cx="11" cy="11" r="9" /></svg>
        <input type="text" placeholder="在这里输入你要搜索的内容" aria-label="搜索" />
        <svg class="mic" viewBox="0 0 12 18"><path d="M3.500 1.500H8.500V11.500H3.500ZM1 8V14.500H11V8M6 14.500V17.500M3 17.500H9" /></svg>
      </label>
      <div class="apps">
        <button v-for="a in apps" :key="a.n" :aria-label="a.n" :class="{ run: a.run, multi: a.multi, active: a.active }"><svg viewBox="0 0 24 24" v-html="a.s"></svg></button>
        <button class="run" aria-label="热点新闻"><span class="hot">热点</span></button>
      </div>
      <div class="tray">
        <div class="two cpu"><span>66%</span><span>CPU使用</span></div>
        <button aria-label="显示隐藏的图标"><svg class="w12" viewBox="0 0 12 12"><path d="M1 8.500 6 3.500 11 8.500" class="ln" /></svg></button>
        <button aria-label="NVIDIA"><svg viewBox="0 0 16 16"><path d="M0 1H16V15H0Z" fill="#33404a" /><path d="M6 3H16V15H6L3 12Z" fill="#76b900" /><path d="M2 8Q8 2 13 8 8 13 2 8ZM5 8Q8 5 10 8 8 10 5 8" fill="none" stroke="#1e3a05" /></svg></button>
        <button aria-label="电池"><svg viewBox="0 0 16 16"><path d="M4.500 5.500H14.500V12.500H4.500ZM15 7.500V10.500M1 1V4M4 1V4M0 4.500H5M2.500 5V9" class="ln" /><path d="M6 7H13V11H6Z" fill="#fff" /></svg></button>
        <button aria-label="无线网络"><svg viewBox="0 0 16 16"><path d="M2 15C2 8 7 3 14 3M5 15C5 10 9 6 14 6M8 15C8 12 10 9 14 9" class="ln" /><circle cx="12.500" cy="13.500" r="1.500" fill="#fff" /></svg></button>
        <button aria-label="音量"><svg viewBox="0 0 16 16"><path d="M1 6H3L7 2.500V13.500L3 10H1ZM9 6Q10.500 8 9 10M11 4Q14 8 11 12M13 2.500Q17 8 13 13.500" class="ln" /></svg></button>
        <button class="ime" aria-label="输入法">英</button>
        <button aria-label="搜狗"><svg viewBox="0 0 16 16"><path d="M2 2 14 0 16 13 3 16 0 6Z" fill="#f04e14" /><path d="M12 4H7C3 4 4 7.500 8 8S12 12 8 12H4" fill="none" stroke="#fff" stroke-width="2" /></svg></button>
        <div class="two clock"><span>7:51</span><span>2017/7/23</span></div>
        <button class="note" aria-label="2 条新通知"><svg viewBox="0 0 26 26"><path d="M1 2H17V16H8L4 20V16H1Z" fill="#fff" /><path d="M4 6H14M4 9H14M4 12H10" stroke="#000" /><circle cx="17" cy="17" r="8" fill="#333" stroke="#999" /></svg><b>2</b></button>
      </div>
    </nav>

    <div class="sogou">
      <svg class="s" viewBox="0 0 28 28"><path d="M4 4 24 1 Q27 1 27 4L28 21Q28 24 25 24L7 27Q4 27 3 24L1 8Q1 5 4 4Z" fill="#f4511e" /><path d="M22 7 13 8C5 9 7 14 14 14S23 20 15 21L7 22" fill="none" stroke="#fff" stroke-width="3.500" /></svg>
      <b>英</b>
      <svg viewBox="0 0 16 16"><circle cx="4" cy="5" r="2" /><path d="M10 9H13Q14 13 10 14Q12 12 10 11Z" /></svg>
      <svg viewBox="0 0 16 16"><rect x="5" y="0" width="6" height="10" rx="3" /><path d="M2.500 7Q3 12 8 12T13.500 7M8 12V16M5 15.500H11" class="st" /></svg>
      <svg viewBox="0 0 16 16"><path d="M1 3H15V13H1Z" class="st" /><path d="M3 5.500H13M3 8H13M4 10.500H12" class="st" stroke-dasharray="1.500 1" /></svg>
      <svg class="mute" viewBox="0 0 16 16"><circle cx="6" cy="4" r="3" /><path d="M0 14C0 6 8 7 9 9V14Z" /><path d="M10 9V15M12 9.500H15M12 9V15H15V12H12" class="st" /></svg>
      <svg viewBox="0 0 16 16"><path d="M5 1Q8 4 11 1L16 4 14 8 12 7V15H4V7L2 8 0 4Z" /></svg>
      <svg viewBox="0 0 16 16"><path d="M15 4 12 7 9 4 12 1C7 0 6 4 7 7L1 13 3 15 9 9C13 10 16 8 15 4Z" /></svg>
    </div>
  </div>
</template>

<style>
body { background: #f0f0f0; }
</style>

<style scoped>
.app {
  position: relative;
  display: grid;
  grid-template-columns: 203px minmax(0, 1fr);
  grid-template-rows: 23px 30px 31px 27px 27px 30px minmax(0, 1fr) 29px 22px 40px;
  grid-template-areas: "title title" "menu menu" "main main" "side edit" "side comp" "side draw" "side canvas" "side snap" "status status" "task task";
  height: 100vh;
  overflow: hidden;
  background: #f0f0f0;
  color: #000;
  font: 12px/16px "Open Sans", "Noto Sans CJK SC", sans-serif;
}
.defs { position: absolute; }
button { border: 0; padding: 0; margin: 0; background: none; color: inherit; font: inherit; }
svg { display: block; flex: none; }
.ic { width: 16px; height: 16px; }

.title { grid-area: title; display: flex; align-items: center; background: #fff; padding-left: 2px; gap: 5px; }
.title h1 { flex: 1; margin: 0; font: 400 12px/20px "Noto Sans", "Noto Sans CJK SC", sans-serif; white-space: nowrap; overflow: hidden; }
.winbtns { display: flex; padding-right: 2px; }
.winbtns button { width: 46px; height: 20px; display: flex; align-items: center; justify-content: center; }
.winbtns svg { width: 12px; height: 12px; fill: none; stroke: #000; }

.row { display: flex; min-width: 0; white-space: nowrap; }
.menu { grid-area: menu; gap: 2px; }
.main { grid-area: main; padding: 1px 0 2px; gap: 2px; }
.edit { grid-area: edit; padding-bottom: 1px; }
.comp { grid-area: comp; padding-bottom: 1px; }
.draw { grid-area: draw; padding: 2px 0 1px; gap: 2px; }
.snap { grid-area: snap; padding: 2px 0; }
.group { display: flex; align-items: center; gap: 7px; padding: 0 5px 0 4px; flex: none; border-radius: 2px; background: linear-gradient(#fdfdfd, #f1f1f1); }
.grow { flex: 1 1 0; min-width: 0; }
.menus { background: none; gap: 11px; padding: 0 5px 0 7px; font-family: "Noto Sans", "Noto Sans CJK SC", sans-serif; }
.tip { margin-left: auto; width: 187px; box-sizing: border-box; justify-content: center; }
.tip a { color: #0b6b6b; text-decoration: none; }
.account { flex: 0 0 240px; box-sizing: border-box; }
.files { width: 143px; }
.calc { width: 539px; }
.axis { margin-left: 75px; }
.stub { width: 24px; background: linear-gradient(90deg, #f4f4f4, #fff); }
.wide { padding-left: 7px; }
.item { display: flex; align-items: center; flex: none; height: 24px; }
.item .ic + span { margin-left: 4px; }
.off { color: #8d8d8d; }
.on { border: 1px solid #0078d7; background: #dcebf8; padding: 0 3px; margin: 0 -4px; box-sizing: border-box; height: 24px; }
.arrow { border: 3px solid transparent; border-top-color: #000; border-bottom: 0; margin: 0 -1px 0 7px; }
.arrow.tight { margin: 0 0 0 2px; }
.off .arrow { border-top-color: #777; }
.sep { width: 1px; height: 18px; margin-right: -2px; background: #b4b4b4; flex: none; }
.grip { width: 2px; height: 15px; margin-right: -2px; flex: none; background: repeating-linear-gradient(#b0b0b0 0 2px, transparent 2px 4px); }
.more { margin-left: auto; align-self: flex-start; font-weight: 700; font-size: 14px; line-height: 14px; }
.combo { position: relative; width: 69px; height: 23px; margin: 0 -2px; background: #fff; flex: none; box-sizing: border-box; }
.combo.short { width: 57px; }
.combo select { appearance: none; width: 100%; height: 100%; border: 0; padding: 0 0 0 2px; background: none; font: inherit; color: #000; }
.combo .arrow { position: absolute; right: 3px; top: 10px; margin: 0; }
.combo.boxed { width: 55px; border: 1px solid #7c7c7c; }
.boxed .arrow { border-top-color: #777; }

.side { grid-area: side; display: flex; flex-direction: column; width: 199px; min-height: 0; background: #f0f0f0; }
.sidehead { display: flex; align-items: center; gap: 8px; height: 16px; margin-bottom: 1px; padding-right: 4px; background: #0054e3; color: #fff; flex: none; }
.sidehead span { flex: 1; font-size: 13px; }
.sidehead svg { width: 10px; height: 10px; fill: none; stroke: #fff; }
.tab { flex: none; height: 22px; width: 198px; border: 1px solid #a0a0a0; border-top-color: #fff; background: #f0f0f0; box-shadow: inset 1px 0 #fff; }
.sidetools { display: flex; align-items: center; gap: 6px; height: 27px; flex: none; padding-left: 6px; background: linear-gradient(#fff, #f1f1f1); }
.sidetools svg { width: 18px; height: 16px; fill: none; }
.sidetools .o { stroke: #000; stroke-width: 3; }
.sidetools .n { stroke: #008080; stroke-width: 1; }
.treebox { flex: 1; min-height: 0; display: flex; width: 196px; box-sizing: border-box; margin: 0 0 2px 1px; padding-top: 1px; border: 1px solid #828790; background: #fff; overflow: hidden; }
.tree { flex: 1; margin: 0; padding: 0; list-style: none; }
.tree li { position: relative; display: flex; align-items: center; height: 16px; padding-left: 7px; }
.tree button { display: flex; align-items: center; height: 16px; }
.tree .name { padding: 1px 4px 0 5px; white-space: nowrap; line-height: 15px; }
.tree small { font: 10px/15px "Liberation Mono", monospace; }
.tree b { background: #ffe838; font-size: 11px; }
.tree .sel .name { background: #d9d9d9; }
.tree .kid { padding-left: 31px; }
.kid::before { content: ""; position: absolute; left: 12px; top: 0; height: 16px; border-left: 1px dotted #808080; }
.trunk { position: absolute; left: 31px; top: 0; height: 16px; border-left: 1px dotted #808080; }
.last .trunk { height: 8px; }
.branch { width: 11px; border-top: 1px dotted #808080; }
.chev { width: 10px; height: 10px; fill: none; stroke: #a0a0a0; stroke-width: 2; }
.chev.open { transform: rotate(90deg); stroke: #404040; }
.dash { width: 3px; margin: 0 0 0 3px; border-top: 1px dotted #808080; }
.scroll { width: 17px; display: flex; flex-direction: column; align-items: center; padding: 4px 0; background: #f0f0f0; }
.scroll svg { width: 10px; height: 10px; fill: none; stroke: #505050; stroke-width: 2; }
.track { flex: 1; width: 15px; padding: 30px 0 17px; display: flex; }
.thumb { flex: 1; background: #cdcdcd; }

.canvas { grid-area: canvas; margin-right: 1px; background: #000; overflow: hidden; min-height: 0; }
.px { shape-rendering: crispEdges; }
.gr { fill: #008000; }
.rd { fill: #ff0000; }
.dk { fill: #800000; }
.ye { fill: #ffff00; }
.mg { fill: #ff00ff; }
.gl { fill: none; stroke: #008000; }
.lab { fill: #d8d8d8; font: 15px "Liberation Sans", sans-serif; text-anchor: middle; }
.dim { fill: #606060; }
.ucs { font: 200 13px "Liberation Sans", sans-serif; text-anchor: middle; }
.ucs.y { fill: #00ff00; }
.ucs.x { fill: #ff0000; }

.status { grid-area: status; display: flex; gap: 2px; padding-top: 2px; background: #fafafa; font: 10px/18px "Liberation Mono", monospace; }
.status em { font: 12px/18px "Noto Sans CJK SC", sans-serif; }
.status span { border: 1px solid #d5d5d5; background: linear-gradient(#fff, #f1f1f1); white-space: nowrap; box-sizing: border-box; padding-left: 1px; overflow: hidden; }
.status .c1, .status .c4, .status .c6 { padding-top: 1px; }
.c1 { width: 148px; }
.c2 { width: 78px; }
.c3 { width: 98px; }
.c4 { width: 48px; }
.c5 { flex: 1; }
.c6 { width: 71px; }

.task { grid-area: task; display: flex; background: #020b0d; color: #fff; }
.start { width: 48px; background: #000; display: flex; align-items: center; justify-content: center; }
.start svg { width: 16px; height: 16px; fill: #fff; }
.search { flex: 0 0 344px; box-sizing: border-box; display: flex; align-items: center; background: #333; padding: 0 14px 0 9px; }
.ring { width: 22px; height: 22px; fill: none; stroke: #fff; stroke-width: 3; }
.search input { flex: 1; min-width: 0; border: 0; outline: 0; padding: 0 0 0 5px; background: none; color: #fff; font: 14px/20px "Open Sans", "Noto Sans CJK SC", sans-serif; }
.search input::placeholder { color: #999; opacity: 1; }
.mic { width: 12px; height: 18px; fill: none; stroke: #aaa; }
.apps { display: flex; padding-left: 6px; gap: 1px; }
.apps button { position: relative; width: 48px; padding: 0 12px; display: flex; align-items: center; justify-content: center; }
.apps svg { width: 24px; height: 24px; }
.apps .run::after { content: ""; position: absolute; left: 4px; right: 4px; bottom: 0; height: 2px; background: #76b9ed; }
.apps .multi::after { background: linear-gradient(90deg, #76b9ed 78%, #456f90 78%); }
.apps .active { background: #343d40; }
.apps .active::after { left: 0; right: 0; }
.hot { width: 24px; height: 24px; flex: none; box-sizing: border-box; border-radius: 3px; border-top: 3px solid #e8e8e8; border-bottom: 4px solid #e8e8e8; background: #1592ee; font-size: 11px; font-weight: 700; line-height: 17px; text-align: center; white-space: nowrap; }
.tray { margin-left: auto; display: flex; align-items: center; gap: 8px; }
.tray svg { width: 16px; height: 16px; }
.tray .w12 { width: 12px; height: 12px; margin-right: 3px; }
.ln { fill: none; stroke: #fff; }
.two { display: flex; flex-direction: column; align-items: center; line-height: 18px; font-size: 12px; }
.cpu { margin-right: 12px; }
.clock { margin: 0 14px 0 9px; }
.ime { font-size: 13px; font-weight: 500; margin-right: 6px; }
.note { position: relative; margin-right: 13px; }
.tray .note svg { width: 26px; height: 26px; }
.note b { position: absolute; right: 5px; bottom: 1px; font-size: 12px; }

.sogou { position: absolute; left: 602px; bottom: 51px; display: flex; align-items: center; gap: 6px; height: 22px; padding-right: 4px; border: 1px solid #b9cbe0; background: #fff; color: #1f6fc5; }
.sogou b { font-size: 15px; }
.sogou svg { width: 16px; height: 16px; fill: #1f6fc5; }
.sogou .s { width: 28px; height: 28px; margin-top: -5px; margin-left: -2px; }
.sogou .st { fill: none; stroke: #1f6fc5; stroke-width: 1.500; }
.sogou .mute { fill: #b5bcc6; }
.sogou .mute .st { stroke: #b5bcc6; }
</style>
